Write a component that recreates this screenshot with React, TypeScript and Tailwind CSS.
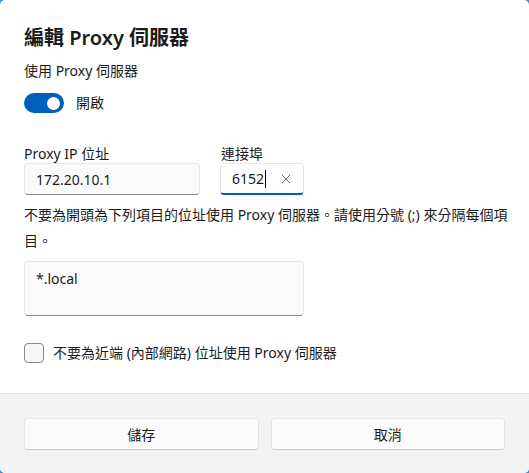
import React from "react";

const font = {
  fontFamily: '"Segoe UI", "Noto Sans", "Noto Sans CJK TC", sans-serif',
};

export default function App() {
  return (
    <div className="w-[529px] h-[473px] bg-[#3d8fd8]" style={font}>
      <div className="w-full h-full bg-white rounded-[5px] overflow-hidden flex flex-col text-[#1b1b1b]">
        <div className="flex-1 flex flex-col pl-6 pr-6 pt-6">
          <div className="text-[20px] leading-[28px] font-semibold">編輯 Proxy 伺服器</div>
          <div className="mt-[9px] text-[14px] leading-[20px]">使用 Proxy 伺服器</div>
          <div className="mt-[12px] flex items-center gap-3">
            <div className="w-10 h-5 rounded-full bg-[#005fb8] flex items-center justify-end pr-[4px]">
              <div className="w-[13px] h-[13px] rounded-full bg-white" />
            </div>
            <span className="text-[14px] leading-[20px]">開啟</span>
          </div>
          <div className="mt-[31px] flex gap-[20px]">
            <div className="flex flex-col w-[176px]">
              <div className="text-[14px] leading-[19px]">Proxy IP 位址</div>
              <div className="h-8 rounded-[4px] border border-[#e5e5e5] border-b-[#8d8d8d] bg-[#fbfbfb] flex items-center pl-[11px] text-[14px]">
                172.20.10.1
              </div>
            </div>
            <div className="flex flex-col w-[84px]">
              <div className="text-[14px] leading-[19px] pl-px">連接埠</div>
              <div className="h-8 rounded-[4px] border border-[#e5e5e5] border-b-2 border-b-[#005fb8] bg-white flex items-center pl-[11px] pr-[10px] text-[14px]">
                <span>6152</span>
                <span className="w-px h-[18px] bg-black ml-[1px]" />
                <span className="flex-1" />
                <svg width="10" height="10" viewBox="0 0 10 10" className="mr-[2px]">
                  <path d="M1 1 L9 9 M9 1 L1 9" stroke="#6b6b6b" strokeWidth="1" fill="none" />
                </svg>
              </div>
            </div>
          </div>
          <div className="mt-[7px] text-[14px] leading-[26px]">
            <div className="whitespace-nowrap">不要為開頭為下列項目的位址使用 Proxy 伺服器。請使用分號 (;) 來分隔每個項</div>
            <div>目。</div>
          </div>
          <div className="mt-[7px] w-[280px] h-[55px] rounded-[4px] border border-[#e5e5e5] border-b-[#8d8d8d] bg-[#fbfbfb] pl-[11px] pt-[7px] text-[14px] leading-[20px]">
            *.local
          </div>
          <div className="mt-[27px] flex items-center gap-[9px]">
            <div className="w-5 h-5 rounded-[4px] border border-[#8a8a8a] bg-[#f7f7f7]" />
            <span className="text-[14px] leading-[20px]">不要為近端 (內部網路) 位址使用 Proxy 伺服器</span>
          </div>
        </div>
        <div className="h-[80px] border-t border-[#e5e5e5] bg-[#f3f3f3] px-6 pt-6 flex gap-3">
          <button className="flex-1 h-8 rounded-[4px] bg-[#fbfbfb] border border-[#e5e5e5] border-b-[#cccccc] text-[14px] text-[#1b1b1b]">
            儲存
          </button>
          <button className="flex-1 h-8 rounded-[4px] bg-[#fbfbfb] border border-[#e5e5e5] border-b-[#cccccc] text-[14px] text-[#1b1b1b]">
            取消
          </button>
        </div>
      </div>
    </div>
  );
}
